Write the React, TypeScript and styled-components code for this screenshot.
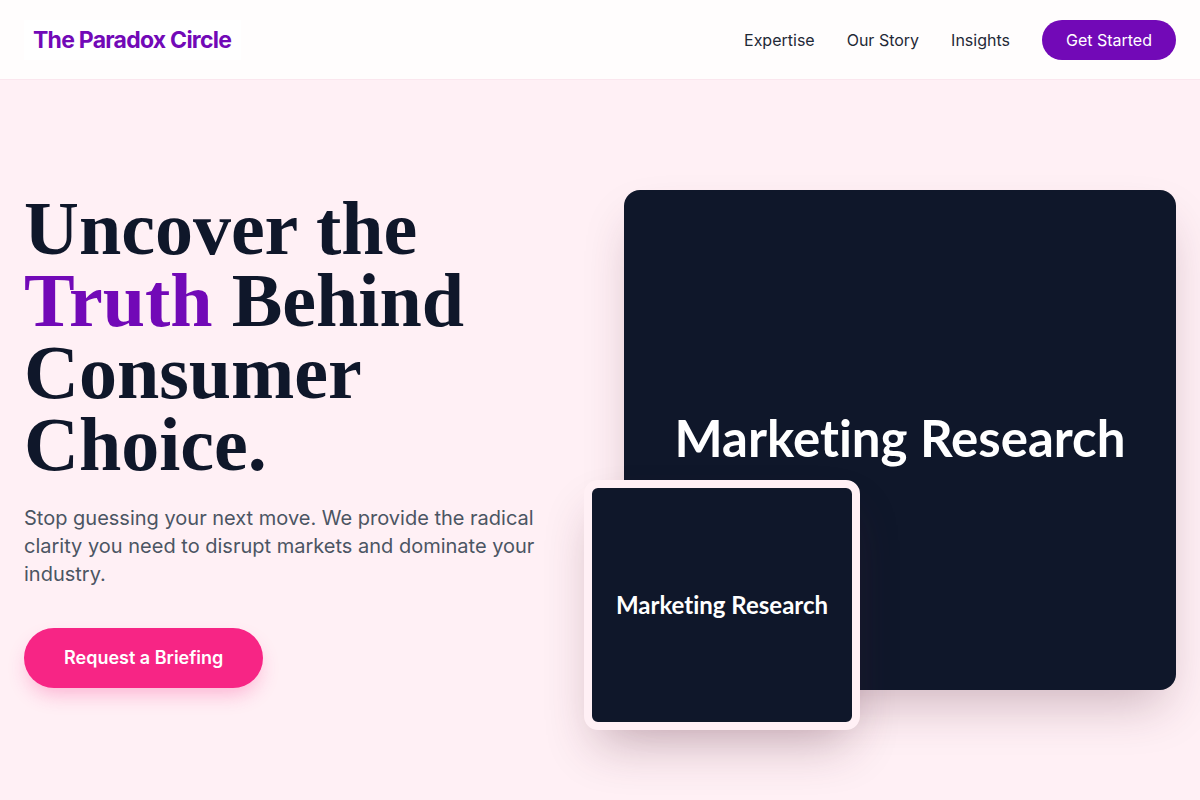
import React from "react";
import styled, { createGlobalStyle } from "styled-components";

const GlobalStyle = createGlobalStyle`
  * { box-sizing: border-box; }
  html, body { margin: 0; padding: 0; }
  body {
    background: #fff0f5;
    font-family: Inter, "Noto Sans", sans-serif;
    color: #0f172a;
  }
`;

const Page = styled.div`
  min-height: 100vh;
  background: #fff0f5;
`;

const Header = styled.header`
  height: 80px;
  display: flex;
  align-items: center;
  justify-content: space-between;
  padding: 0 24px;
  background: rgba(255, 255, 255, 0.82);
  border-bottom: 1px solid #fbe6ee;
`;

const Logo = styled.a`
  display: inline-block;
  padding: 8px 10px 8px 9px;
  background: #ffffff;
  font-family: Inter, sans-serif;
  font-weight: 700;
  font-size: 23px;
  line-height: 24px;
  letter-spacing: -0.75px;
  color: #7209b7;
  text-decoration: none;
`;

const Nav = styled.nav`
  display: flex;
  align-items: center;
  gap: 32px;
`;

const NavLink = styled.a`
  font-size: 16px;
  line-height: 24px;
  color: #1f2937;
  text-decoration: none;
`;

const NavButton = styled.a`
  display: inline-block;
  padding: 8px 24px;
  border-radius: 9999px;
  background: #7209b7;
  color: #ffffff;
  font-size: 16px;
  line-height: 24px;
  text-decoration: none;
`;

const Hero = styled.section`
  min-height: calc(100vh - 80px);
  display: grid;
  grid-template-columns: 1fr 1fr;
  gap: 48px;
  align-items: center;
  padding: 0 24px;
`;

const Left = styled.div`
  display: flex;
  flex-direction: column;
  align-items: flex-start;
`;

const Headline = styled.h1`
  margin: 0;
  font-family: "Liberation Serif", "Times New Roman", serif;
  font-weight: 700;
  font-size: 76px;
  line-height: 72px;
  letter-spacing: 0;
  color: #0f172a;
`;

const Accent = styled.span`
  color: #7209b7;
`;

const Lead = styled.p`
  margin: 24px 0 0;
  font-size: 20px;
  line-height: 28px;
  color: #4b5563;
`;

const CTA = styled.a`
  margin-top: 40px;
  display: inline-block;
  padding: 18px 40px;
  border-radius: 9999px;
  background: #f72585;
  color: #ffffff;
  font-weight: 600;
  font-size: 18px;
  line-height: 24px;
  text-decoration: none;
  box-shadow: 0 10px 20px -4px rgba(247, 37, 133, 0.3);
`;

const Visual = styled.div`
  position: relative;
  height: 500px;
`;

const BigCard = styled.div`
  height: 100%;
  border-radius: 16px;
  background: #0f172a;
  display: flex;
  align-items: center;
  justify-content: center;
  box-shadow: 0 25px 50px -12px rgba(80, 30, 50, 0.28);
`;

const CardLabel = styled.span<{ $size: number; $lift: number }>`
  font-family: Lato, "Open Sans", sans-serif;
  font-weight: 700;
  font-size: ${(p) => p.$size}px;
  font-variant-ligatures: none;
  color: #ffffff;
  white-space: nowrap;
  margin-bottom: ${(p) => p.$lift}px;
`;

const SmallCard = styled.div`
  position: absolute;
  left: -40px;
  bottom: -40px;
  width: 276px;
  height: 250px;
  border: 8px solid #fff0f5;
  border-radius: 14px;
  background: #0f172a;
  display: flex;
  align-items: center;
  justify-content: center;
  box-shadow: 0 25px 50px -12px rgba(80, 30, 50, 0.3);
`;

export default function App() {
  return (
    <Page>
      <GlobalStyle />
      <Header>
        <Logo href="#">The Paradox Circle</Logo>
        <Nav>
          <NavLink href="#">Expertise</NavLink>
          <NavLink href="#">Our Story</NavLink>
          <NavLink href="#">Insights</NavLink>
          <NavButton href="#">Get Started</NavButton>
        </Nav>
      </Header>
      <Hero>
        <Left>
          <Headline>
            Uncover the
            <br />
            <Accent>Truth</Accent> Behind
            <br />
            Consumer
            <br />
            Choice.
          </Headline>
          <Lead>
            Stop guessing your next move. We provide the radical clarity you
            need to disrupt markets and dominate your industry.
          </Lead>
          <CTA href="#">Request a Briefing</CTA>
        </Left>
        <Visual>
          <BigCard>
            <CardLabel $size={51} $lift={6}>Marketing Research</CardLabel>
          </BigCard>
          <SmallCard>
            <CardLabel $size={24} $lift={2}>Marketing Research</CardLabel>
          </SmallCard>
        </Visual>
      </Hero>
    </Page>
  );
}
